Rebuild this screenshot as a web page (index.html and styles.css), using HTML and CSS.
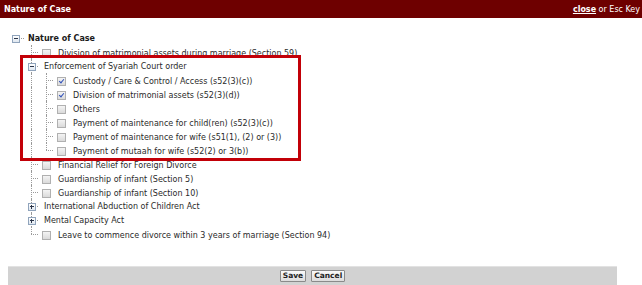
FILE: index.html
```html
<!DOCTYPE html>
<html>
<head>
<meta charset="utf-8">
<title>Nature of Case</title>
<link rel="stylesheet" href="styles.css">
</head>
<body>
<header class="bar">
  <span class="title">Nature of Case</span>
  <span class="closer"><a class="close">close</a> or Esc Key</span>
</header>
<main class="content">
  <ul class="tree">
    <li class="row">
      <span class="cell rootexp"><span class="box minus"></span></span>
      <span class="label bold root-label">Nature of Case</span>
    </li>
    <li class="row chk">
      <span class="cell"></span><span class="cell tee"></span>
      <span class="cb"></span><span class="label">Division of matrimonial assets during marriage (Section 59)</span>
    </li>
    <li class="row">
      <span class="cell"></span><span class="cell tee"><span class="box minus"></span></span>
      <span class="label folder">Enforcement of Syariah Court order</span>
    </li>
    <li class="row chk">
      <span class="cell"></span><span class="cell line"></span><span class="cell tee"></span>
      <span class="cb checked"></span><span class="label">Custody / Care &amp; Control / Access (s52(3)(c))</span>
    </li>
    <li class="row chk">
      <span class="cell"></span><span class="cell line"></span><span class="cell tee"></span>
      <span class="cb checked"></span><span class="label">Division of matrimonial assets (s52(3)(d))</span>
    </li>
    <li class="row chk">
      <span class="cell"></span><span class="cell line"></span><span class="cell tee"></span>
      <span class="cb"></span><span class="label">Others</span>
    </li>
    <li class="row chk">
      <span class="cell"></span><span class="cell line"></span><span class="cell tee"></span>
      <span class="cb"></span><span class="label">Payment of maintenance for child(ren) (s52(3)(c))</span>
    </li>
    <li class="row chk">
      <span class="cell"></span><span class="cell line"></span><span class="cell tee"></span>
      <span class="cb"></span><span class="label">Payment of maintenance for wife (s51(1), (2) or (3))</span>
    </li>
    <li class="row chk">
      <span class="cell"></span><span class="cell line"></span><span class="cell elbow"></span>
      <span class="cb"></span><span class="label">Payment of mutaah for wife (s52(2) or 3(b))</span>
    </li>
    <li class="row chk">
      <span class="cell"></span><span class="cell tee"></span>
      <span class="cb"></span><span class="label">Financial Relief for Foreign Divorce</span>
    </li>
    <li class="row chk">
      <span class="cell"></span><span class="cell tee"></span>
      <span class="cb"></span><span class="label">Guardianship of infant (Section 5)</span>
    </li>
    <li class="row chk">
      <span class="cell"></span><span class="cell tee"></span>
      <span class="cb"></span><span class="label">Guardianship of infant (Section 10)</span>
    </li>
    <li class="row">
      <span class="cell"></span><span class="cell tee"><span class="box plus"></span></span>
      <span class="label folder">International Abduction of Children Act</span>
    </li>
    <li class="row">
      <span class="cell"></span><span class="cell tee"><span class="box plus"></span></span>
      <span class="label folder">Mental Capacity Act</span>
    </li>
    <li class="row chk">
      <span class="cell"></span><span class="cell elbow"></span>
      <span class="cb"></span><span class="label">Leave to commence divorce within 3 years of marriage (Section 94)</span>
    </li>
  </ul>
  <div class="highlight"></div>
</main>
<footer class="foot">
  <button class="btn" type="button">Save</button>
  <button class="btn" type="button">Cancel</button>
</footer>
</body>
</html>
```
FILE: styles.css
```css
html, body {
  margin: 0;
  padding: 0;
  background: #ffffff;
  font-family: "DejaVu Sans", Verdana, sans-serif;
  color: #2a2a2a;
  overflow: hidden;
}

.bar {
  height: 18px;
  background: #6e0000;
  color: #ffffff;
  display: flex;
  justify-content: space-between;
  align-items: center;
  padding: 0 2px 0 4px;
  font-size: 8px;
}
.title { font-weight: bold; font-size: 8px; }
.closer { font-size: 8px; }
.close {
  font-weight: bold;
  text-decoration: underline;
}

.content {
  position: relative;
  height: 248px;
  box-sizing: border-box;
  padding: 13px 0 0 8px;
}

.tree {
  list-style: none;
  margin: 0;
  padding: 0;
  font-size: 8px;
}

.row {
  height: 14px;
  display: flex;
  align-items: center;
  white-space: nowrap;
}
.row.chk { padding-top: 2px; box-sizing: border-box; }

.cell {
  width: 15px;
  height: 14px;
  flex: none;
  position: relative;
  align-self: flex-start;
}
.row.chk .cell { margin-top: -2px; }

.line::before,
.tee::before,
.elbow::before {
  content: "";
  position: absolute;
  left: 8px;
  top: 0;
  bottom: 0;
  border-left: 1px dotted #9a9a9a;
}
.elbow::before { bottom: 7px; }
.tee::after,
.elbow::after,
.rootexp::after {
  content: "";
  position: absolute;
  left: 8px;
  top: 7px;
  width: 7px;
  border-top: 1px dotted #9a9a9a;
}
.rootexp::after { left: 13px; width: 3px; }

.box {
  position: absolute;
  left: 5px;
  top: 4px;
  width: 6px;
  height: 6px;
  border: 1px solid #90a4bc;
  background: linear-gradient(#ffffff, #dfe7f0);
  z-index: 1;
}
.box::before {
  content: "";
  position: absolute;
  left: 1px;
  top: 2px;
  width: 4px;
  height: 1px;
  background: #2a3448;
}
.box.plus::after {
  content: "";
  position: absolute;
  left: 2px;
  top: 1px;
  width: 1px;
  height: 4px;
  background: #2a3448;
}
.rootexp .box { left: 4px; }

.cb {
  flex: none;
  width: 7px;
  height: 7px;
  margin-left: 4px;
  border: 1px solid #b0b0b0;
  background: linear-gradient(#f4f4f4, #dadada);
  position: relative;
}
.cb.checked::after {
  content: "";
  position: absolute;
  left: 2px;
  top: 0px;
  width: 2px;
  height: 4px;
  border-right: 1.5px solid #3050b8;
  border-bottom: 1.5px solid #3050b8;
  transform: rotate(40deg);
}

.label { margin-left: 7px; }
.label.folder { margin-left: 6px; }
.root-label { margin-left: 5px; }
.bold { font-weight: bold; color: #1a1a1a; }

.highlight {
  position: absolute;
  left: 20px;
  top: 37px;
  width: 281px;
  height: 106px;
  box-sizing: border-box;
  border: 3px solid #c20008;
  pointer-events: none;
}

.foot {
  margin: 0 25px 0 8px;
  height: 24px;
  box-sizing: border-box;
  background: #d2d2d2;
  border-top: 1px solid #e2e2e2;
  display: flex;
  justify-content: center;
  align-items: flex-start;
  gap: 5px;
  padding-top: 3px;
}
.btn {
  font-family: "DejaVu Sans", Verdana, sans-serif;
  font-weight: bold;
  font-size: 7.5px;
  color: #222;
  height: 12px;
  line-height: 10px;
  padding: 0 2px;
  margin: 0;
  border: 1px solid #8a8a8a;
  border-radius: 1px;
  background: linear-gradient(#fafafa, #dcdcdc);
}
```
